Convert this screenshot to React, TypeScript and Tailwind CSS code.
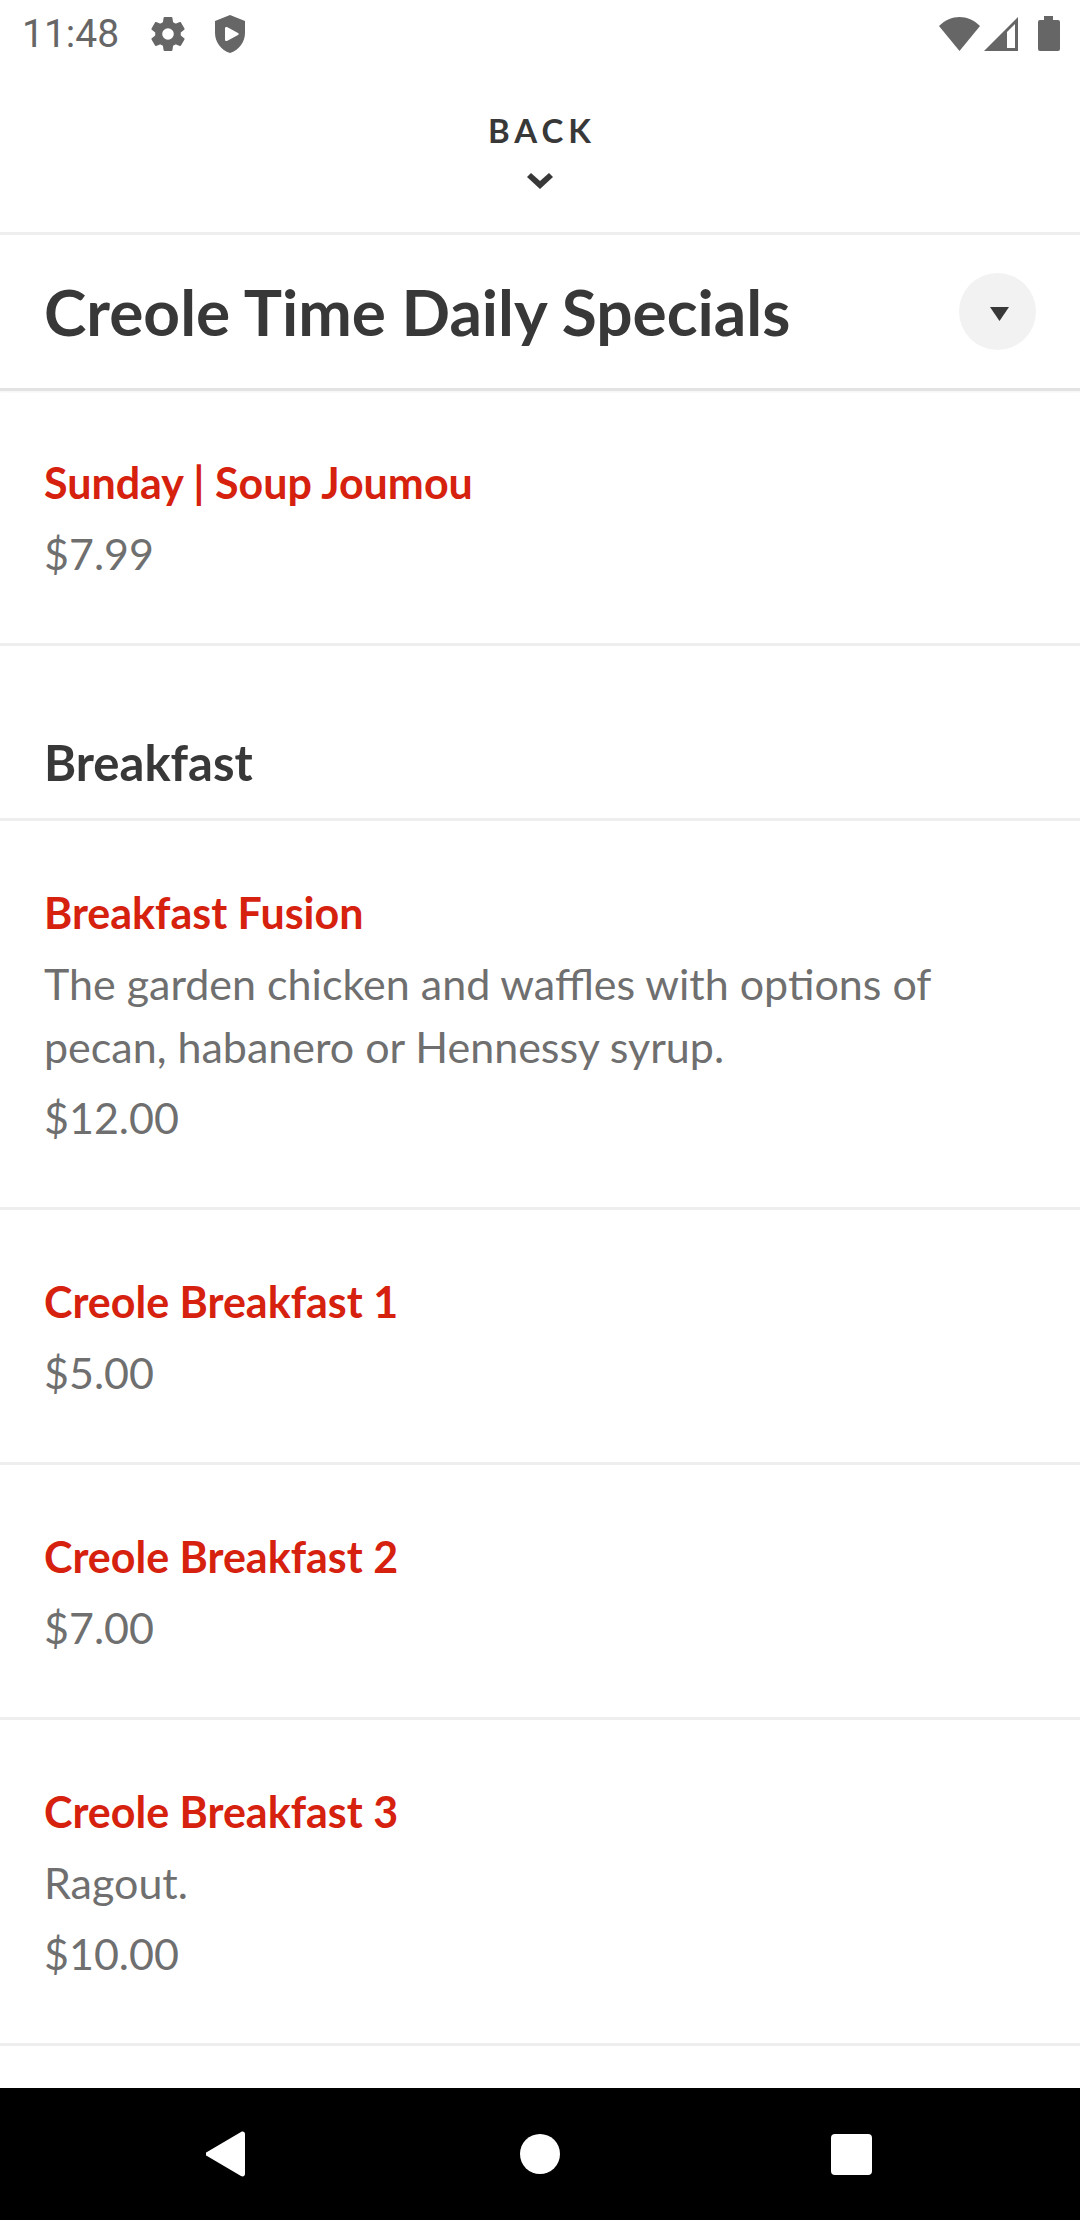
import React from "react";

type Item = {
  name: string;
  description?: string;
  price: string;
};

const specials: Item[] = [{ name: "Sunday | Soup Joumou", price: "$7.99" }];

const breakfast: Item[] = [
  {
    name: "Breakfast Fusion",
    description:
      "The garden chicken and waffles with options of pecan, habanero or Hennessy syrup.",
    price: "$12.00",
  },
  { name: "Creole Breakfast 1", price: "$5.00" },
  { name: "Creole Breakfast 2", price: "$7.00" },
  { name: "Creole Breakfast 3", description: "Ragout.", price: "$10.00" },
];

const gearTeeth = [0, 60, 120, 180, 240, 300];

const StatusBar = () => (
  <div className="flex h-[67px] items-center justify-between pr-5 pl-[22px] text-[#666666]">
    <div className="flex items-center">
      <span className="font-['Roboto',sans-serif] text-[39px] leading-[48px]">11:48</span>
      <svg className="ml-8 size-[34px]" viewBox="0 0 34 34" fill="currentColor" aria-hidden="true">
        <circle cx="17" cy="17" r="9.3" fill="none" stroke="currentColor" strokeWidth="7" />
        {gearTeeth.map((angle) => (
          <path
            key={angle}
            d="M13.500 0h7c.5 0 .8.3.9.8L22.500 8h-11l1.100-7.200c.1-.5.4-.8.9-.8Z"
            transform={`rotate(${angle} 17 17)`}
          />
        ))}
      </svg>
      <svg className="ml-[29px] h-[38px] w-8" viewBox="0 0 32 38" fill="currentColor" aria-hidden="true">
        <path
          fillRule="evenodd"
          d="M16 0 31 6v12c0 9-6 17-15 20C7 35 1 27 1 18V6L16 0Zm-5 13v12c0 1 1 1 2 1l11-6c1-1 1-1 0-2l-11-6c-1 0-2 0-2 1Z"
        />
      </svg>
    </div>
    <div className="flex items-center">
      <svg className="h-[34px] w-[41px]" viewBox="0 0 41 34" fill="currentColor" aria-hidden="true">
        <path d="M0 9C12-3 29-3 41 9L20.500 34Z" />
      </svg>
      <svg className="ml-1 size-[34px]" viewBox="0 0 34 34" fill="currentColor" aria-hidden="true">
        <path fillRule="evenodd" d="M0 34 34 0v34H0Zm23-19v16h8V7l-8 8Z" />
      </svg>
      <svg className="ml-5 h-[35px] w-[22px]" viewBox="0 0 22 35" fill="currentColor" aria-hidden="true">
        <path d="M6 0h9v4h5a2 2 0 0 1 2 2v27a2 2 0 0 1-2 2H2a2 2 0 0 1-2-2V6a2 2 0 0 1 2-2h4V0Z" />
      </svg>
    </div>
  </div>
);

const MenuItem = ({ item }: { item: Item }) => (
  <li className="flex flex-col gap-2 border-b-3 border-[#eeeeee] px-11 pt-[60px] pb-[58px]">
    <h3 className="font-bold text-[#d6210f]">{item.name}</h3>
    {item.description && <p>{item.description}</p>}
    <p>{item.price}</p>
  </li>
);

const NavBar = () => (
  <nav className="flex h-[132px] shrink-0 items-center justify-around bg-black px-[74px] text-white">
    <button type="button" aria-label="Back">
      <svg className="size-[46px]" viewBox="0 0 46 46" fill="currentColor">
        <path d="M35 1c2-1 4 0 4 2v40c0 2-2 3-4 2L1 25c-2-1-2-3 0-4L35 1Z" />
      </svg>
    </button>
    <button type="button" aria-label="Home">
      <svg className="size-[46px]" viewBox="0 0 46 46" fill="currentColor">
        <circle cx="23" cy="23" r="20" />
      </svg>
    </button>
    <button type="button" aria-label="Recent apps">
      <svg className="size-[46px]" viewBox="0 0 46 46" fill="currentColor">
        <rect x="3" y="3" width="41" height="41" rx="4" />
      </svg>
    </button>
  </nav>
);

const App = () => {
  return (
    <div className="flex min-h-screen flex-col bg-white font-['Lato',sans-serif] text-[43px] leading-[63px] text-[#6f6f6f]">
      <StatusBar />

      <header className="flex h-[168px] justify-center border-b-3 border-[#eeeeee] pt-[43px]">
        <button type="button" className="flex flex-col items-center self-start text-[#383838]">
          <span className="pl-1 text-[33px] leading-10 font-bold tracking-[5px]">BACK</span>
          <svg className="mt-[23px] h-4 w-[26px]" viewBox="0 0 26 16" fill="currentColor" aria-hidden="true">
            <path d="M4 0 13 8 22 0 26 4 13 16 0 4Z" />
          </svg>
        </button>
      </header>

      <div className="flex items-center justify-between border-b-3 border-[#e3e3e3] px-11 py-[38px] text-[#383838] shadow-xs">
        <h1 className="text-[64px] leading-[76px] font-bold">Creole Time Daily Specials</h1>
        <button
          type="button"
          aria-label="Choose menu"
          className="flex size-[77px] items-center justify-center rounded-full bg-[#f2f2f2] pt-1 pl-1"
        >
          <svg className="h-[14px] w-[19px]" viewBox="0 0 19 14" fill="currentColor">
            <path d="M0 0h19L9.500 14Z" />
          </svg>
        </button>
      </div>

      <main className="grow">
        <ul>
          {specials.map((item) => (
            <MenuItem key={item.name} item={item} />
          ))}
        </ul>
        <h2 className="border-b-3 border-[#eeeeee] px-11 pt-20 pb-5 text-[49px] leading-[72px] font-bold text-[#383838]">
          Breakfast
        </h2>
        <ul>
          {breakfast.map((item) => (
            <MenuItem key={item.name} item={item} />
          ))}
        </ul>
      </main>

      <NavBar />
    </div>
  );
};

export default App;
